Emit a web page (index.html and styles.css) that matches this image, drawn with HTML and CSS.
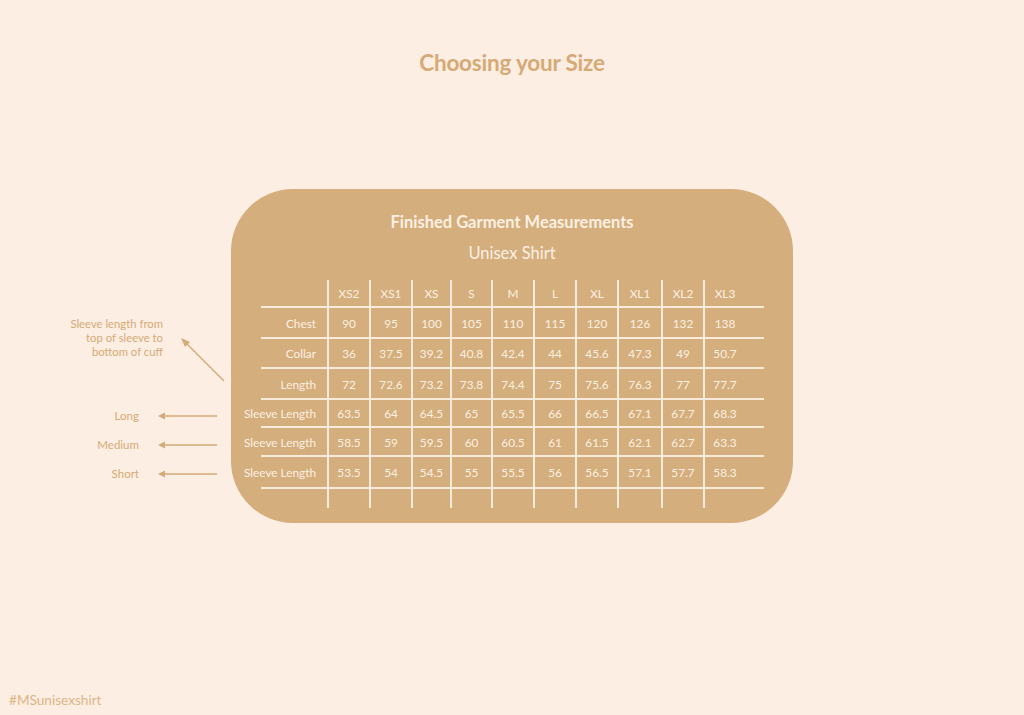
FILE: index.html
```html
<!DOCTYPE html>
<html lang="en">
<head>
<meta charset="utf-8">
<title>Choosing your Size</title>
<link rel="stylesheet" href="styles.css">
</head>
<body>
<h1 class="title">Choosing your Size</h1>
<div class="main">
  <div class="annot">
    <div class="note">
      <p class="note-text">Sleeve length from<br>top of sleeve to<br>bottom of cuff</p>
      <svg class="diag" width="68" height="84" viewBox="0 0 68 84">
        <line x1="61" y1="64" x2="22" y2="25" stroke="#d4aa77" stroke-width="1.4"/>
        <polygon points="18,21 27,25 22,30" fill="#d4aa77"/>
      </svg>
    </div>
    <div class="pointer"><span class="plabel">Long</span><svg class="parrow" width="60" height="8" viewBox="0 0 60 8"><line x1="6" y1="4" x2="59" y2="4" stroke="#d4aa77" stroke-width="1.5"/><polygon points="0,4 7,0.5 7,7.5" fill="#d4aa77"/></svg></div>
    <div class="pointer"><span class="plabel">Medium</span><svg class="parrow" width="60" height="8" viewBox="0 0 60 8"><line x1="6" y1="4" x2="59" y2="4" stroke="#d4aa77" stroke-width="1.5"/><polygon points="0,4 7,0.5 7,7.5" fill="#d4aa77"/></svg></div>
    <div class="pointer"><span class="plabel">Short</span><svg class="parrow" width="60" height="8" viewBox="0 0 60 8"><line x1="6" y1="4" x2="59" y2="4" stroke="#d4aa77" stroke-width="1.5"/><polygon points="0,4 7,0.5 7,7.5" fill="#d4aa77"/></svg></div>
  </div>
  <section class="card">
    <h2 class="card-title">Finished Garment Measurements</h2>
    <h3 class="card-sub">Unisex Shirt</h3>
    <div class="grid">
      <div class="c lab"></div><div class="c">XS2</div><div class="c">XS1</div><div class="c">XS</div><div class="c">S</div><div class="c">M</div><div class="c">L</div><div class="c">XL</div><div class="c">XL1</div><div class="c">XL2</div><div class="c">XL3</div>
      <div class="c lab">Chest</div><div class="c">90</div><div class="c">95</div><div class="c">100</div><div class="c">105</div><div class="c">110</div><div class="c">115</div><div class="c">120</div><div class="c">126</div><div class="c">132</div><div class="c">138</div>
      <div class="c lab">Collar</div><div class="c">36</div><div class="c">37.5</div><div class="c">39.2</div><div class="c">40.8</div><div class="c">42.4</div><div class="c">44</div><div class="c">45.6</div><div class="c">47.3</div><div class="c">49</div><div class="c">50.7</div>
      <div class="c lab">Length</div><div class="c">72</div><div class="c">72.6</div><div class="c">73.2</div><div class="c">73.8</div><div class="c">74.4</div><div class="c">75</div><div class="c">75.6</div><div class="c">76.3</div><div class="c">77</div><div class="c">77.7</div>
      <div class="c lab">Sleeve Length</div><div class="c">63.5</div><div class="c">64</div><div class="c">64.5</div><div class="c">65</div><div class="c">65.5</div><div class="c">66</div><div class="c">66.5</div><div class="c">67.1</div><div class="c">67.7</div><div class="c">68.3</div>
      <div class="c lab">Sleeve Length</div><div class="c">58.5</div><div class="c">59</div><div class="c">59.5</div><div class="c">60</div><div class="c">60.5</div><div class="c">61</div><div class="c">61.5</div><div class="c">62.1</div><div class="c">62.7</div><div class="c">63.3</div>
      <div class="c lab">Sleeve Length</div><div class="c">53.5</div><div class="c">54</div><div class="c">54.5</div><div class="c">55</div><div class="c">55.5</div><div class="c">56</div><div class="c">56.5</div><div class="c">57.1</div><div class="c">57.7</div><div class="c">58.3</div>
      <div class="c lab"></div><div class="c"></div><div class="c"></div><div class="c"></div><div class="c"></div><div class="c"></div><div class="c"></div><div class="c"></div><div class="c"></div><div class="c"></div><div class="c"></div>
    </div>
  </section>
</div>
<footer class="footer">#MSunisexshirt</footer>
</body>
</html>
```

FILE: styles.css
```css
* { box-sizing: border-box; }
html, body { margin: 0; padding: 0; }
body {
  width: 1024px;
  height: 715px;
  background: #fdeee3;
  font-family: Lato, "Noto Sans", sans-serif;
  display: flex;
  flex-direction: column;
  overflow: hidden;
}
.title {
  margin: 49px 0 0;
  text-align: center;
  font-size: 22.5px;
  line-height: 28px;
  font-weight: 700;
  color: #d5aa75;
  letter-spacing: -0.2px;
}
.main {
  display: flex;
  margin-top: 112px;
}
.annot {
  width: 231px;
  padding-top: 128px;
  display: flex;
  flex-direction: column;
  color: #d5aa75;
}
.note {
  height: 84px;
  display: flex;
}
.note-text {
  margin: 0;
  width: 163px;
  text-align: right;
  font-size: 11.3px;
  line-height: 14px;
}
.diag { display: block; }
.pointer {
  height: 29px;
  display: flex;
  align-items: center;
}
.plabel {
  width: 139px;
  text-align: right;
  font-size: 11.5px;
}
.parrow {
  display: block;
  margin-left: 19px;
}
.card {
  width: 562px;
  height: 334px;
  background: #d4ae7c;
  border-radius: 62px;
  padding: 23px 0 0 30px;
  color: #fdf0e3;
}
.card-title {
  margin: 0 30px 0 0;
  text-align: center;
  font-size: 16.5px;
  line-height: 20px;
  font-weight: 700;
}
.card-sub {
  margin: 11px 30px 0 0;
  text-align: center;
  font-size: 16.5px;
  line-height: 20px;
  font-weight: 400;
}
.grid {
  margin-top: 17px;
  display: grid;
  grid-template-columns: 66px 42px 42px 39px 41px 42px 42px 42px 44px 42px 61px;
  grid-template-rows: 28px 31px 30px 31px 28px 29px 32px 19px;
  width: 503px;
  font-size: 11.8px;
}
.c {
  display: flex;
  align-items: center;
  justify-content: center;
  border-left: 2px solid #f9ebdc;
  border-bottom: 2px solid #f9ebdc;
  white-space: nowrap;
  padding-top: 1px;
}
.c.lab {
  border-left: none;
  justify-content: flex-end;
  padding-right: 11px;
}
.c:nth-child(11n) { padding-right: 19px; }
.c:nth-last-child(-n+11) { border-bottom: none; }
.footer {
  margin-top: auto;
  padding: 0 0 6px 9px;
  font-size: 13.6px;
  line-height: 17px;
  color: #dcb586;
}
```
